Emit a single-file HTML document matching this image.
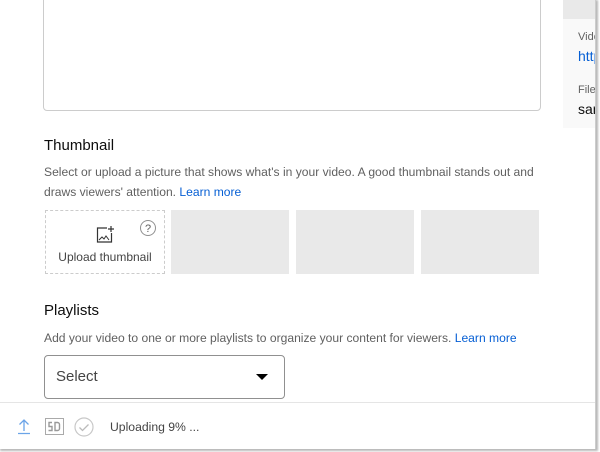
<!DOCTYPE html>
<html><head><meta charset="utf-8"><style>
*{margin:0;padding:0;box-sizing:border-box}
body{width:600px;height:452px;background:#fff;font-family:"Liberation Sans",Arial,sans-serif;position:relative;overflow:hidden}
#frame{position:absolute;left:0;top:0;width:596px;height:449px;background:#fff;box-shadow:1px 1px 2px 1px #b8b8b8;border-right:1px solid #ccc;overflow:hidden}
.abs{position:absolute}
.h{font-size:15px;color:#0d0d0d}
.p{font-size:12.1px;color:#606060;line-height:20px}
a{color:#065fd4;text-decoration:none}
.ph{background:#e9e9e9;top:210px;height:64px}
</style></head><body><div id="frame">
<div class="abs" style="left:43px;top:-5px;width:498px;height:116px;border:1px solid #ccc;border-radius:4px"></div>
<div class="abs" style="left:563px;top:0;width:40px;height:128px;background:#f9f9f9"></div>
<div class="abs" style="left:563px;top:0;width:40px;height:19px;background:#e9e9e9"></div>
<div class="abs" style="left:578px;top:31px;font-size:11px;color:#606060">Video</div>
<div class="abs" style="left:578px;top:48px;font-size:14px;color:#065fd4">https</div>
<div class="abs" style="left:578px;top:84px;font-size:11px;color:#606060">File</div>
<div class="abs" style="left:578px;top:101px;font-size:14px;color:#0d0d0d">sam</div>

<div class="abs h" style="left:44px;top:137px">Thumbnail</div>
<div class="abs p" style="left:44px;top:162px;width:510px">Select or upload a picture that shows what's in your video. A good thumbnail stands out and draws viewers' attention. <a>Learn more</a></div>

<div class="abs" style="left:45px;top:210px;width:120px;height:64px;border:1px dashed #ccc"></div>
<svg class="abs" style="left:139px;top:219px" width="18" height="18" viewBox="0 0 18 18"><circle cx="9" cy="9" r="7.5" fill="none" stroke="#909090" stroke-width="1"/><text x="9" y="13" font-size="11" text-anchor="middle" fill="#606060" font-family="Liberation Sans">?</text></svg>
<svg class="abs" style="left:96px;top:226px" width="20" height="18" viewBox="0 0 20 18"><path d="M11 2H1.5v14h14V7" fill="none" stroke="#333" stroke-width="1.2"/><path d="M15 0v6M12 3h6" stroke="#333" stroke-width="1.2"/><path d="M3 14l3-3 2 2 2-3 3 4" fill="none" stroke="#333" stroke-width="1"/></svg>
<div class="abs" style="left:45px;top:250px;width:120px;text-align:center;font-size:12px;color:#444">Upload thumbnail</div>
<div class="abs ph" style="left:171px;width:118px"></div>
<div class="abs ph" style="left:296px;width:118px"></div>
<div class="abs ph" style="left:421px;width:118px"></div>

<div class="abs h" style="left:44px;top:302px">Playlists</div>
<div class="abs p" style="left:44px;top:328px">Add your video to one or more playlists to organize your content for viewers. <a>Learn more</a></div>
<div class="abs" style="left:44px;top:355px;width:241px;height:44px;border:1px solid #909090;border-radius:4px"></div>
<div class="abs" style="left:56px;top:368px;font-size:15px;color:#444">Select</div>
<div class="abs" style="left:256px;top:374px;width:0;height:0;border-left:6px solid transparent;border-right:6px solid transparent;border-top:6px solid #000"></div>

<div class="abs" style="left:0;top:402px;width:600px;height:1px;background:#e5e5e5"></div>
<svg class="abs" style="left:17px;top:418px" width="14" height="17" viewBox="0 0 14 17"><path d="M7 2v11M2.5 6.5L7 2l4.5 4.5M1 15.5h12" fill="none" stroke="#6ba4e8" stroke-width="1.3"/></svg>
<svg class="abs" style="left:45px;top:418px" width="19" height="17" viewBox="0 0 19 17"><rect x="0.5" y="0.5" width="18" height="16" fill="none" stroke="#aaa"/><path d="M7 4.5H4v4h3v4H3.5M10 4.5v8h2.5a2 2 0 0 0 2-2v-4a2 2 0 0 0-2-2z" fill="none" stroke="#999" stroke-width="1.4"/></svg>
<svg class="abs" style="left:74px;top:417px" width="20" height="20" viewBox="0 0 20 20"><circle cx="10" cy="10" r="9" fill="none" stroke="#c8c8c8" stroke-width="1.2"/><path d="M5.5 10.5l3 3 6-6" fill="none" stroke="#bbb" stroke-width="1.3"/></svg>
<div class="abs" style="left:110px;top:420px;font-size:12.2px;color:#444">Uploading 9% ...</div>
</div></body></html>
